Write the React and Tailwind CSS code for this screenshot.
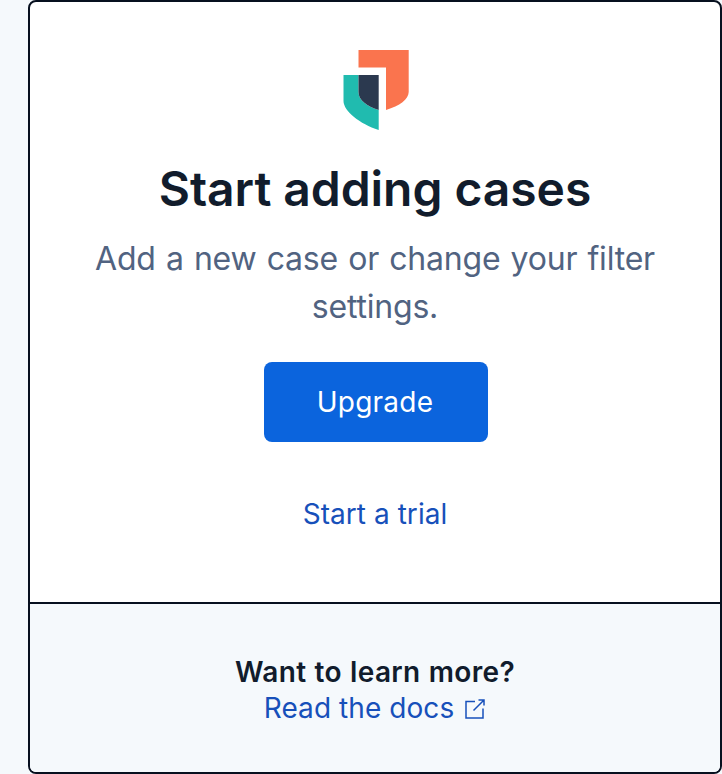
export default function App() {
  return (
    <div className="h-[774px] w-[722px] overflow-hidden bg-[#f5f9fc] pl-7 font-['Inter',sans-serif] antialiased">
      <main className="flex h-[774px] flex-col overflow-hidden rounded-lg border-2 border-[#07101f] bg-white text-center">
        <section className="flex h-[600px] flex-col items-center pt-12">
          <svg className="ml-0.5 h-20 w-[66px]" viewBox="0 0 66 80" aria-hidden="true">
            <path fill="#fa744e" d="M15.5 0h50.2v42c0 7-9 14-22.7 18V17.5H15.5z" />
            <path fill="#20bbaf" d="M.5 25h15v17c0 8 8 14 20.2 18v20C17 74 .5 61 .5 51z" />
            <path fill="#2b394f" d="M15.5 25h20.2v35c-12.2-4-20.2-10-20.2-18z" />
          </svg>
          <h1 className="mt-[27px] text-[48px] leading-[64px] font-semibold tracking-[-0.06px] text-[#111c2c]">Start adding cases</h1>
          <p className="mt-[14px] w-[600px] text-[32px] leading-[48px] tracking-[-0.2px] text-[#516381] [word-spacing:1.4px]">Add a new case or change your filter settings.</p>
          <button className="mt-[31px] ml-0.5 h-20 w-56 shrink-0 rounded-lg bg-[#0b64dd] pr-0.5 text-[28px] leading-10 tracking-[0.25px] text-white">Upgrade</button>
          <a className="mt-[52px] text-[28px] leading-10 tracking-[0.05px] text-[#1750ba]">Start a trial</a>
        </section>
        <footer className="flex flex-1 flex-col items-center border-t-2 border-[#07101f] bg-[#f5f9fc] pt-[50px] text-[28px] leading-9">
          <strong className="font-semibold tracking-[0.37px] text-[#111c2c] [word-spacing:0.6px]">Want to learn more?</strong>
          <a className="flex items-center gap-2 tracking-[0.07px] text-[#1750ba]">
            Read the docs
            <svg className="size-6" viewBox="0 0 24 24" fill="none" stroke="currentColor" strokeWidth="1.5" aria-hidden="true">
              <path d="M13 5.5H4V22h17v-9.5M16.5 4h5.5v5.5M22 4 11.5 14.5" />
            </svg>
          </a>
        </footer>
      </main>
    </div>
  );
}
